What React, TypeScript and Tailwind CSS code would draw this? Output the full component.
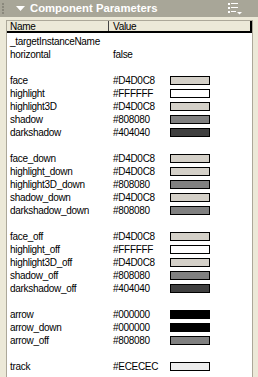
import React from "react";

type Row = { name: string; value: string; color?: string } | null;

const rows: Row[] = [
  { name: "_targetInstanceName", value: "" },
  { name: "horizontal", value: "false" },
  null,
  { name: "face", value: "#D4D0C8", color: "#D4D0C8" },
  { name: "highlight", value: "#FFFFFF", color: "#FFFFFF" },
  { name: "highlight3D", value: "#D4D0C8", color: "#D4D0C8" },
  { name: "shadow", value: "#808080", color: "#808080" },
  { name: "darkshadow", value: "#404040", color: "#404040" },
  null,
  { name: "face_down", value: "#D4D0C8", color: "#D4D0C8" },
  { name: "highlight_down", value: "#D4D0C8", color: "#D4D0C8" },
  { name: "highlight3D_down", value: "#808080", color: "#808080" },
  { name: "shadow_down", value: "#D4D0C8", color: "#D4D0C8" },
  { name: "darkshadow_down", value: "#808080", color: "#808080" },
  null,
  { name: "face_off", value: "#D4D0C8", color: "#D4D0C8" },
  { name: "highlight_off", value: "#FFFFFF", color: "#FFFFFF" },
  { name: "highlight3D_off", value: "#D4D0C8", color: "#D4D0C8" },
  { name: "shadow_off", value: "#808080", color: "#808080" },
  { name: "darkshadow_off", value: "#404040", color: "#404040" },
  null,
  { name: "arrow", value: "#000000", color: "#000000" },
  { name: "arrow_down", value: "#000000", color: "#000000" },
  { name: "arrow_off", value: "#808080", color: "#808080" },
  null,
  { name: "track", value: "#ECECEC", color: "#ECECEC" },
];

export default function App() {
  return (
    <div
      className="w-[258px] h-[377px] overflow-hidden bg-[#ECE9D8] flex flex-col text-[10px] tracking-[-0.3px] text-black"
      style={{ fontFamily: '"Liberation Sans", Arial, sans-serif' }}
    >
      {/* title bar */}
      <div className="h-[17px] bg-[#A8A698] flex items-center shrink-0">
        <div className="ml-[2px] flex flex-col gap-[1px] w-[3px]">
          <div className="w-[2px] h-[2px] bg-[#8a887c]" />
          <div className="w-[2px] h-[2px] bg-[#8a887c]" />
          <div className="w-[2px] h-[2px] bg-[#8a887c]" />
          <div className="w-[2px] h-[2px] bg-[#8a887c]" />
        </div>
        <svg width="9" height="6" viewBox="0 0 9 6" className="ml-[11px]">
          <polygon points="0,0 9,0 4.5,5" fill="#ffffff" />
        </svg>
        <span className="ml-[5px] text-white font-bold text-[11.3px] tracking-normal leading-none">
          Component Parameters
        </span>
        <svg width="14" height="12" viewBox="0 0 14 12" className="ml-auto mr-[16px]">
          <rect x="0" y="0" width="2" height="2" fill="#fff" />
          <rect x="3" y="0" width="7" height="1" fill="#fff" />
          <rect x="0" y="4" width="2" height="2" fill="#fff" />
          <rect x="3" y="4" width="7" height="1" fill="#fff" />
          <rect x="0" y="8" width="2" height="2" fill="#fff" />
          <rect x="3" y="8" width="5" height="1" fill="#fff" />
          <polygon points="9,9 14,9 11.5,11.5" fill="#fff" />
        </svg>
      </div>
      {/* panel body */}
      <div className="flex-1 flex pt-[3px] pl-[6px] pr-[5px]">
        <div className="flex-1 flex flex-col border-l border-r border-t border-[#ACA899] bg-white">
          {/* column header */}
          <div className="h-[12px] flex bg-[#ECE9D8] border-b-2 border-b-black shrink-0 leading-[12px]">
            <div className="w-[102px] pl-[3px] border-r border-[#444]">Name</div>
            <div className="flex-1 pl-[4px] border-r-2 border-black">Value</div>
          </div>
          <div className="pt-[2px]">
            {rows.map((r, i) => (
              <div key={i} className="h-[13px] flex items-center leading-[13px]">
                {r && (
                  <>
                    <div className="w-[103px] pl-[3px] whitespace-nowrap">{r.name}</div>
                    <div className="w-[60px] pl-[3px]">{r.value}</div>
                    {r.color && (
                      <div
                        className="w-[40px] h-[9px] border border-black"
                        style={{ backgroundColor: r.color }}
                      />
                    )}
                  </>
                )}
              </div>
            ))}
          </div>
        </div>
      </div>
    </div>
  );
}
